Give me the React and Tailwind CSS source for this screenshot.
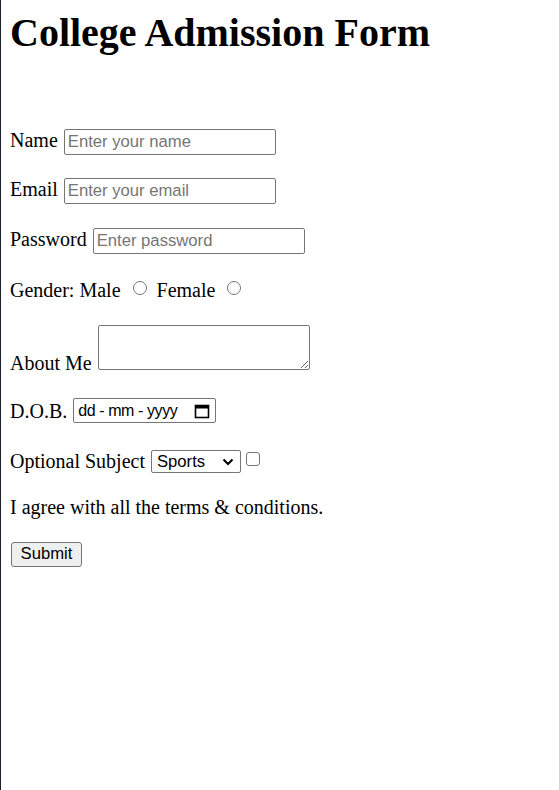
const sans = { fontFamily: '"Liberation Sans", Arial, sans-serif' };

const inputCls =
  'h-[26px] w-[212px] rounded-[2px] border border-[#767676] bg-white px-[3px] text-[16.67px] text-black placeholder:text-[#757575] outline-none';

const Radio = () => (
  <span className="inline-block h-[14px] w-[14px] rounded-full border border-[#767676] bg-white" />
);

const App = () => {
  return (
    <div
      className="min-h-[790px] border-l border-[#1c2130] bg-white pl-[9px] pt-[10px] text-[20px] text-black"
      style={{ fontFamily: '"Liberation Serif", "Times New Roman", serif' }}
    >
      <h1 className="m-0 text-[40px] font-bold leading-[46px]">College Admission Form</h1>

      <form onSubmit={(e) => e.preventDefault()}>
        {/* Name */}
        <div className="mt-[69px] flex h-[30px] items-baseline gap-[6px]">
          <span>Name</span>
          <input className={inputCls} style={sans} placeholder="Enter your name" />
        </div>

        {/* Email */}
        <div className="mt-[19px] flex h-[30px] items-baseline gap-[6px]">
          <span>Email</span>
          <input className={inputCls} style={sans} placeholder="Enter your email" />
        </div>

        {/* Password */}
        <div className="mt-[20px] flex h-[30px] items-baseline gap-[6px]">
          <span>Password</span>
          <input type="password" className={inputCls} style={sans} placeholder="Enter password" />
        </div>

        {/* Gender */}
        <div className="mt-[24px] flex h-[23px] items-center">
          <span>Gender: Male</span>
          <span className="mb-[3px] ml-[12px] flex">
            <Radio />
          </span>
          <span className="ml-[10px]">Female</span>
          <span className="mb-[3px] ml-[12px] flex">
            <Radio />
          </span>
        </div>

        {/* About */}
        <div className="mt-[24px] flex h-[45px] items-end">
          <span className="mb-[-5px] leading-[23px]">About Me</span>
          <textarea
            className="ml-[6px] block h-[45px] w-[212px] rounded-[2px] border border-[#767676] bg-white outline-none"
            style={sans}
          />
        </div>

        {/* DOB */}
        <div className="mt-[28px] flex h-[25px] items-center gap-[6px]">
          <span>D.O.B.</span>
          <div
            className="flex h-[25px] w-[143px] items-center justify-between rounded-[2px] border border-[#767676] bg-white pl-[4px] pr-[4px] text-[16px]"
            style={sans}
          >
            <span className="tracking-[-0.4px]">
              dd<span className="mx-[4px]">-</span>mm<span className="mx-[4px]">-</span>yyyy
            </span>
            <svg width="16" height="16" viewBox="0 0 16 16" className="mr-[1px]">
              <rect x="1.5" y="2.5" width="13" height="12" fill="none" stroke="#000" strokeWidth="1.6" />
              <rect x="1.5" y="2.5" width="13" height="3" fill="#000" />
            </svg>
          </div>
        </div>

        {/* Optional subject */}
        <div className="mt-[27px] flex h-[23px] items-center">
          <span className="mb-[2px]">Optional Subject</span>
          <div
            className="ml-[6px] flex h-[23px] w-[90px] items-center justify-between rounded-[2px] border border-[#767676] bg-white pl-[5px] pr-[6px] text-[16.67px]"
            style={sans}
          >
            <span>Sports</span>
            <svg width="12" height="8" viewBox="0 0 12 8">
              <path d="M1.5 1.5 L6 6 L10.5 1.5" fill="none" stroke="#000" strokeWidth="2" />
            </svg>
          </div>
          <span className="mb-[6px] ml-[5px] inline-block h-[14px] w-[14px] rounded-[3px] border border-[#767676] bg-white" />
        </div>

        {/* Terms */}
        <p className="mt-[23px] leading-[23px]">I agree with all the terms &amp; conditions.</p>

        {/* Submit */}
        <button
          type="submit"
          className="mt-[23px] ml-[1px] h-[25px] w-[71px] rounded-[3px] border border-[#767676] bg-[#efefef] text-[16.67px] leading-none text-black"
          style={sans}
        >
          Submit
        </button>
      </form>
    </div>
  );
};

export default App;
